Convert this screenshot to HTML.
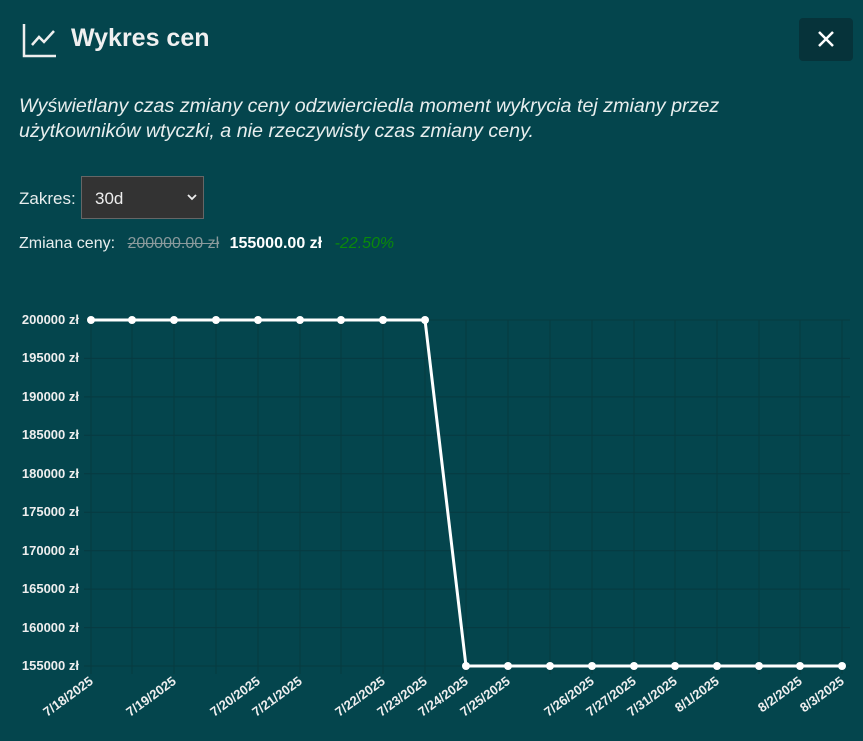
<!DOCTYPE html>
<html><head><meta charset="utf-8"><style>
body{margin:0;width:863px;height:741px;background:#04454d;font-family:"Liberation Sans",sans-serif;color:#eef;overflow:hidden;position:relative}
.t{position:absolute;left:71px;top:24px;font-size:25px;font-weight:bold;color:#f0f0f0}
.x{position:absolute;left:799px;top:18px;width:54px;height:43px;background:#06333a;border-radius:4px}
.d{position:absolute;left:19px;top:94px;font-size:19.7px;font-style:italic;color:#e8eeee;line-height:25px}
.z{position:absolute;left:19px;top:189px;font-size:17px;color:#e8eeee}
.s{position:absolute;left:81px;top:176px;width:123px;height:43px;background:#333;border:1px solid #666;box-sizing:border-box;color:#eee;font-size:17px;padding:12px 0 0 13px}
.p{position:absolute;left:19px;top:235px;font-size:16px;color:#e8eeee}
</style></head><body>
<svg style="position:absolute;left:22px;top:24px" width="36" height="34"><path d="M2 0V32H34" stroke="#eee" stroke-width="2.5" fill="none"/><path d="M10 21L17 13L22 18L32 7" stroke="#eee" stroke-width="2.5" fill="none"/></svg>
<div class="t">Wykres cen</div>
<div class="x"><svg width="54" height="43"><path d="M20 14L34 28M34 14L20 28" stroke="#fff" stroke-width="2.5"/></svg></div>
<div class="d">Wyświetlany czas zmiany ceny odzwierciedla moment wykrycia tej zmiany przez<br>użytkowników wtyczki, a nie rzeczywisty czas zmiany ceny.</div>
<div class="z">Zakres:</div>
<div class="s">30d<svg style="position:absolute;right:6px;top:17px" width="10" height="7"><path d="M1 1L5 5L9 1" stroke="#eee" stroke-width="1.8" fill="none"/></svg></div>
<div class="p">Zmiana ceny: <span style="color:#8a9a9c;text-decoration:line-through;margin-left:8px">200000.00 zł</span> <b style="color:#fff;margin-left:6px">155000.00 zł</b> <i style="color:#0a8a0a;margin-left:8px">-22.50%</i></div>
<svg style="position:absolute;left:0;top:0" width="863" height="741" font-family="Liberation Sans" font-size="13" font-weight="bold" fill="#eee">
<g stroke="#063a40" stroke-width="1">
<path d="M84 320H850M84 358.4H850M84 396.9H850M84 435.3H850M84 473.8H850M84 512.2H850M84 550.7H850M84 589.1H850M84 627.6H850M84 666H850"/>
<path d="M91 320V674M132 320V674M174 320V674M216 320V674M258 320V674M300 320V674M341 320V674M383 320V674M425 320V674M466 320V674M508 320V674M550 320V674M592 320V674M634 320V674M675 320V674M717 320V674M759 320V674M800 320V674M842 320V674"/>
</g>
<g text-anchor="end">
<text x="79" y="324">200000 zł</text><text x="79" y="362">195000 zł</text><text x="79" y="401">190000 zł</text><text x="79" y="439">185000 zł</text><text x="79" y="478">180000 zł</text><text x="79" y="516">175000 zł</text><text x="79" y="555">170000 zł</text><text x="79" y="593">165000 zł</text><text x="79" y="632">160000 zł</text><text x="79" y="670">155000 zł</text>
<text transform="translate(94,683) rotate(-36)">7/18/2025</text>
<text transform="translate(177,683) rotate(-36)">7/19/2025</text>
<text transform="translate(261,683) rotate(-36)">7/20/2025</text>
<text transform="translate(303,683) rotate(-36)">7/21/2025</text>
<text transform="translate(386,683) rotate(-36)">7/22/2025</text>
<text transform="translate(428,683) rotate(-36)">7/23/2025</text>
<text transform="translate(469,683) rotate(-36)">7/24/2025</text>
<text transform="translate(511,683) rotate(-36)">7/25/2025</text>
<text transform="translate(595,683) rotate(-36)">7/26/2025</text>
<text transform="translate(637,683) rotate(-36)">7/27/2025</text>
<text transform="translate(678,683) rotate(-36)">7/31/2025</text>
<text transform="translate(720,683) rotate(-36)">8/1/2025</text>
<text transform="translate(803,683) rotate(-36)">8/2/2025</text>
<text transform="translate(845,683) rotate(-36)">8/3/2025</text>
</g>
<path d="M91 320H425L466 666H842" stroke="#fff" stroke-width="3" fill="none"/>
<g fill="#fff">
<circle cx="91" cy="320" r="4"/><circle cx="132" cy="320" r="4"/><circle cx="174" cy="320" r="4"/><circle cx="216" cy="320" r="4"/><circle cx="258" cy="320" r="4"/><circle cx="300" cy="320" r="4"/><circle cx="341" cy="320" r="4"/><circle cx="383" cy="320" r="4"/><circle cx="425" cy="320" r="4"/>
<circle cx="466" cy="666" r="4"/><circle cx="508" cy="666" r="4"/><circle cx="550" cy="666" r="4"/><circle cx="592" cy="666" r="4"/><circle cx="634" cy="666" r="4"/><circle cx="675" cy="666" r="4"/><circle cx="717" cy="666" r="4"/><circle cx="759" cy="666" r="4"/><circle cx="800" cy="666" r="4"/><circle cx="842" cy="666" r="4"/>
</g>
</svg>
</body></html>
